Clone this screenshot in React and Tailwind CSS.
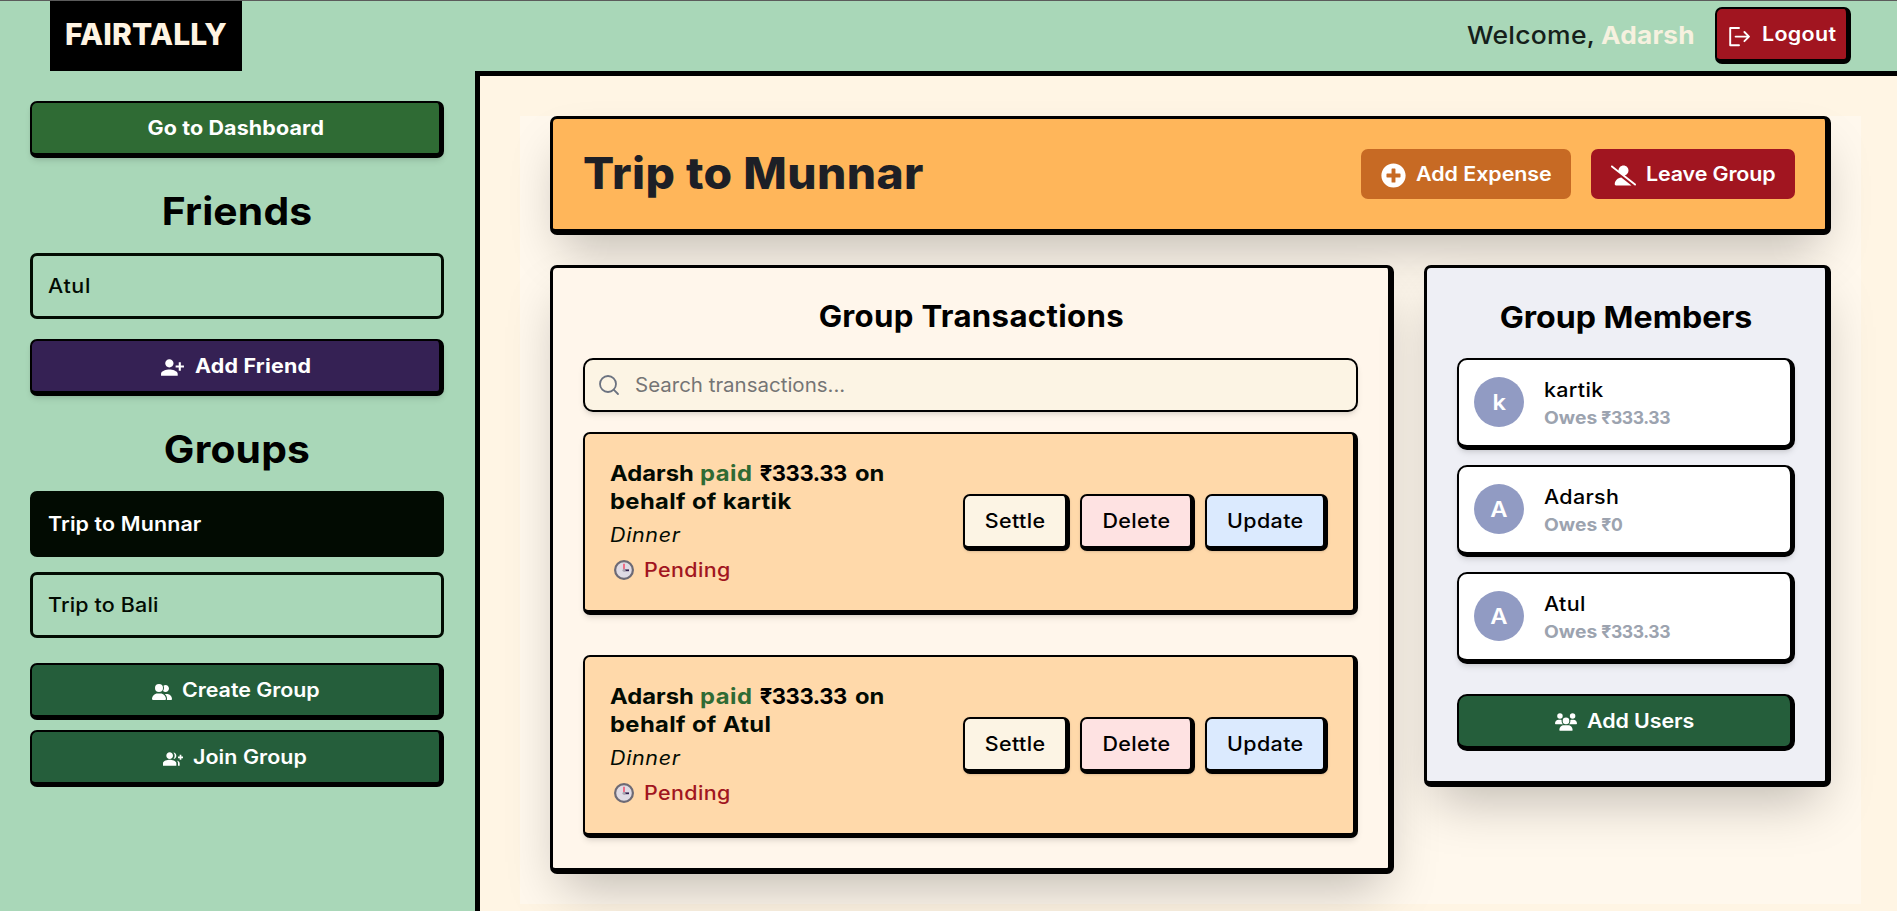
import React from "react";
import { Search } from "lucide-react";
import { MdPersonAddAlt1, MdGroupAdd } from "react-icons/md";
import { FaPlusCircle } from "react-icons/fa";
import { FaUserGroup, FaUsers, FaUserSlash } from "react-icons/fa6";

const raised = "border-2 border-r-[5px] border-b-[5px] border-black";

// Widened text: the left edge stays put, callers reserve the extra room.
const wide = "inline-block origin-left scale-x-110 whitespace-nowrap";
const wideLabel = "inline-block origin-left translate-y-px scale-x-110 whitespace-nowrap";
const wideCenter = "inline-block origin-center translate-x-[0.5px] translate-y-px scale-x-110 whitespace-nowrap";

function LogoutIcon() {
  return (
    <svg width="25" height="25" viewBox="0 0 25 25" fill="none" stroke="currentColor" strokeWidth="1.9" strokeLinecap="round" strokeLinejoin="round">
      <path d="M12 4H3.2V21.2H12" />
      <path d="M8.6 12.6H22M17.4 8L22 12.6L17.4 17.2" />
    </svg>
  );
}

function ClockIcon() {
  return (
    <svg width="20" height="20" viewBox="0 0 20 20" fill="none">
      <circle cx="10" cy="10" r="8.9" fill="#dfdbe4" stroke="#6d6a75" strokeWidth="2.2" />
      <path d="M10 10V3.8" stroke="#f4526e" strokeWidth="1.6" />
      <path d="M10 10.3H15" stroke="#33214f" strokeWidth="1.8" />
      <circle cx="10" cy="10.2" r="1.5" fill="#a9a5b0" />
    </svg>
  );
}

function SideButton({ className, children }) {
  return (
    <button className={`flex h-[57px] w-full shrink-0 items-center justify-center rounded-[7px] text-[19.5px] leading-none text-white ${raised} ${className}`}>
      {children}
    </button>
  );
}

function SideItem({ className, children }) {
  return (
    <div className={`flex h-[66px] shrink-0 items-center rounded-[7px] border-[3px] border-[#020b02] px-[14.5px] text-[19.5px] ${className}`}>
      <span className={wideLabel}>{children}</span>
    </div>
  );
}

function SideHeading({ children }) {
  return (
    <h2 className="mt-[30px] mb-5 text-center text-[38.5px] leading-[45px] font-bold tracking-[0.15px] text-black">
      <span className="inline-block translate-y-px scale-x-[1.06]">{children}</span>
    </h2>
  );
}

function Transaction({ who, className = "" }) {
  return (
    <div className={`flex h-[183px] items-center justify-between rounded-[7px] bg-[#ffd9aa] px-[25px] shadow-md ${raised} ${className}`}>
      <div className="whitespace-nowrap text-[#020b02]">
        <div className="text-[22px] leading-[28px] font-bold">
          <p className="flex">
            <span className="mr-[12.8px] inline-block origin-left scale-x-[1.08]">Adarsh</span>
            <span className="mr-[10.6px] inline-block origin-left scale-x-[1.08] tracking-[0.5px] text-[#2f6b34]">paid</span>
            <span className="mr-[8.4px] tracking-[-0.4px] text-black">₹333.33</span>
            <span className="inline-block origin-left scale-x-[1.08]">on</span>
          </p>
          <p>
            <span className="inline-block origin-left scale-x-[1.08] tracking-[0.35px]">behalf of {who}</span>
          </p>
        </div>
        <p className="mt-[5px] text-[19.5px] leading-[30px] tracking-[0.6px] italic">
          <span className={wide}>Dinner</span>
        </p>
        <p className="mt-[5px] flex items-center pl-[4px] text-[19.5px] leading-[30px] font-medium text-[#a11520]">
          <ClockIcon />
          <span className={`ml-[9.5px] tracking-[0.35px] ${wide}`}>Pending</span>
        </p>
      </div>
      <div className="flex gap-[10px] text-[19.5px] font-medium tracking-[0.35px] text-black">
        <button className={`flex h-[57px] w-[107px] items-center justify-center rounded-[7px] bg-[#fcf4e4] shadow-sm ${raised}`}>
          <span className={wideCenter}>Settle</span>
        </button>
        <button className={`flex h-[57px] w-[115px] items-center justify-center rounded-[7px] bg-[#fee2e2] shadow-sm ${raised}`}>
          <span className={wideCenter}>Delete</span>
        </button>
        <button className={`flex h-[57px] w-[123px] items-center justify-center rounded-[7px] bg-[#dbeafe] shadow-sm ${raised}`}>
          <span className={wideCenter}>Update</span>
        </button>
      </div>
    </div>
  );
}

function Member({ name, amount }) {
  return (
    <div className={`flex h-[92px] items-center rounded-[10px] bg-white px-[15px] pb-px shadow-md ${raised}`}>
      <div className="flex size-[50px] items-center justify-center rounded-full bg-[#919bc3] text-[22px] font-semibold text-white">
        <span className="inline-block scale-x-[1.08]">{name[0]}</span>
      </div>
      <div className="mt-px ml-[19.5px] whitespace-nowrap">
        <p className="text-[19.5px] leading-[30px] font-medium tracking-[0.3px] text-black">
          <span className={wide}>{name}</span>
        </p>
        <p className="flex text-[17.5px] leading-[25px] font-bold text-[#9ca3af]">
          <span className={`mr-[9.5px] ${wide}`}>Owes</span>
          <span className="tracking-[-0.4px]">₹{amount}</span>
        </p>
      </div>
    </div>
  );
}

export default function App() {
  return (
    <div className="flex h-[911px] w-[1897px] flex-col overflow-hidden border-t border-[#5b5b5b] bg-[#a9d7b8] font-['Inter','Noto_Sans',sans-serif]">
      <header className="flex h-[70px] shrink-0 items-center justify-between pr-[46px] pb-px pl-[50px]">
        <div className="flex h-[70px] w-[192px] items-center justify-center self-start bg-black pb-1 text-[30px] font-extrabold tracking-[0.2px] text-[#fff4e3]">FAIRTALLY</div>
        <div className="flex items-center">
          <p className="flex text-[24.3px] whitespace-nowrap">
            <span className="w-[134px]">
              <span className="inline-block origin-left scale-x-[1.09] font-medium tracking-[0.25px] text-[#15201a]">Welcome,</span>
            </span>
            <span className="w-[114.5px]">
              <span className="inline-block origin-left scale-x-[1.08] font-bold tracking-[0.2px] text-[#f6f1df]">Adarsh</span>
            </span>
          </p>
          <button className={`flex h-[57px] w-[136px] items-center rounded-[7px] bg-[#a11520] pl-[10px] text-[19.5px] text-white ${raised}`}>
            <span className="relative top-[2px]"><LogoutIcon /></span>
            <span className={`ml-[10px] font-semibold tracking-[0.3px] ${wideLabel}`}>Logout</span>
          </button>
        </div>
      </header>

      <div className="flex min-h-0 flex-1">
        <aside className="flex w-[475px] shrink-0 flex-col pt-[30px] pr-[31px] pl-[30px]">
          <SideButton className="bg-[#2f6b34] font-bold tracking-[0.12px] shadow-md">
            <span className={wideCenter}>Go to Dashboard</span>
          </SideButton>
          <SideHeading>Friends</SideHeading>
          <SideItem className="font-medium tracking-[0.6px] text-[#020b02]">Atul</SideItem>
          <SideButton className="mt-5 bg-[#352154] font-bold tracking-[0.18px] shadow-md">
            <MdPersonAddAlt1 size={25} className="relative top-[1.5px] mr-[9.5px]" />
            <span className={`mr-[10.5px] ${wideLabel}`}>Add Friend</span>
          </SideButton>
          <SideHeading>Groups</SideHeading>
          <SideItem className="bg-[#020b02] font-semibold tracking-[0.1px] text-white">Trip to Munnar</SideItem>
          <SideItem className="mt-[15px] font-medium tracking-[0.15px] text-[#020b02]">Trip to Bali</SideItem>
          <SideButton className="mt-[25px] bg-[#255e3b] font-semibold tracking-[-0.04px]">
            <FaUserGroup size={20} className="relative top-[2px] mr-[10px]" />
            <span className={`mr-[12px] ${wideLabel}`}>Create Group</span>
          </SideButton>
          <SideButton className="mt-[10px] bg-[#255e3b] font-semibold tracking-[0.05px]">
            <MdGroupAdd size={20} className="relative top-[2px] mr-[10px]" />
            <span className={`mr-[10.5px] ${wideLabel}`}>Join Group</span>
          </SideButton>
        </aside>

        <main className="flex-1 border-t-[5px] border-l-[5px] border-black bg-[#fff5e4] pt-10 pr-9 pl-10">
          <div className="h-[788px] bg-[#fff8ed] px-[30px]">
            <section className="flex h-[119px] items-center justify-between rounded-[7px] border-[3px] border-r-[6px] border-b-[6px] border-black bg-[#ffb65a] px-[30px] shadow-2xl">
              <h1 className="mb-[3px] inline-block origin-left scale-x-[1.05] text-[44px] leading-none font-extrabold tracking-[0.4px] whitespace-nowrap text-[#1d1f26]">Trip to Munnar</h1>
              <div className="flex gap-5 text-[19.5px] font-semibold whitespace-nowrap text-white">
                <button className="flex h-[50px] w-[210px] items-center rounded-[7px] bg-[#c76a24] pl-5 tracking-[-0.05px]">
                  <FaPlusCircle size={25} className="relative top-[1.5px] mr-[9.5px] shrink-0" />
                  <span className={wideLabel}>Add Expense</span>
                </button>
                <button className="flex h-[50px] w-[204px] items-center rounded-[7px] bg-[#a11520] pl-5 tracking-[-0.12px]">
                  <FaUserSlash size={25} className="relative top-[1.5px] mr-[9.5px] shrink-0" />
                  <span className={wideLabel}>Leave Group</span>
                </button>
              </div>
            </section>

            <div className="mt-[30px] flex items-start gap-[30px]">
              <section className="h-[609px] w-[844px] rounded-[7px] border-[3px] border-r-[6px] border-b-[6px] border-black bg-[#fff6eb] px-[30px] shadow-2xl">
                <h2 className="mt-[26px] text-center text-[30px] leading-[44px] font-bold tracking-[0.3px] text-black">
                  <span className="inline-block translate-x-[0.5px] scale-x-[1.04]">Group Transactions</span>
                </h2>
                <div className="mt-5 flex h-[54px] items-center rounded-[10px] border-2 border-black bg-[#fcf4e4] pl-3 shadow-md">
                  <Search size={24} strokeWidth={1.8} className="text-[#6b7280]" />
                  <span className="ml-[14px] inline-block origin-left translate-y-px scale-x-[1.05] text-[19.5px] text-[#757575]">Search transactions...</span>
                </div>
                <Transaction who="kartik" className="mt-5" />
                <Transaction who="Atul" className="mt-10" />
              </section>

              <section className="h-[522px] w-[407px] rounded-[7px] border-[3px] border-r-[6px] border-b-[6px] border-black bg-[#eeeff5] px-[30px] shadow-2xl">
                <h2 className="mt-[27px] text-center text-[30px] leading-[45px] font-bold whitespace-nowrap text-black">
                  <span className="inline-block scale-x-[1.07]">Group Members</span>
                </h2>
                <div className="mt-[18px] flex flex-col gap-[15px]">
                  <Member name="kartik" amount="333.33" />
                  <Member name="Adarsh" amount="0" />
                  <Member name="Atul" amount="333.33" />
                </div>
                <button className={`mt-[30px] flex h-[57px] w-full items-center justify-center rounded-[10px] bg-[#255e3b] text-[19.5px] font-semibold tracking-[-0.08px] text-white ${raised}`}>
                  <FaUsers size={22} className="relative top-px mr-[10px]" />
                  <span className={`mr-[9px] ${wideLabel}`}>Add Users</span>
                </button>
              </section>
            </div>
          </div>
        </main>
      </div>
    </div>
  );
}
